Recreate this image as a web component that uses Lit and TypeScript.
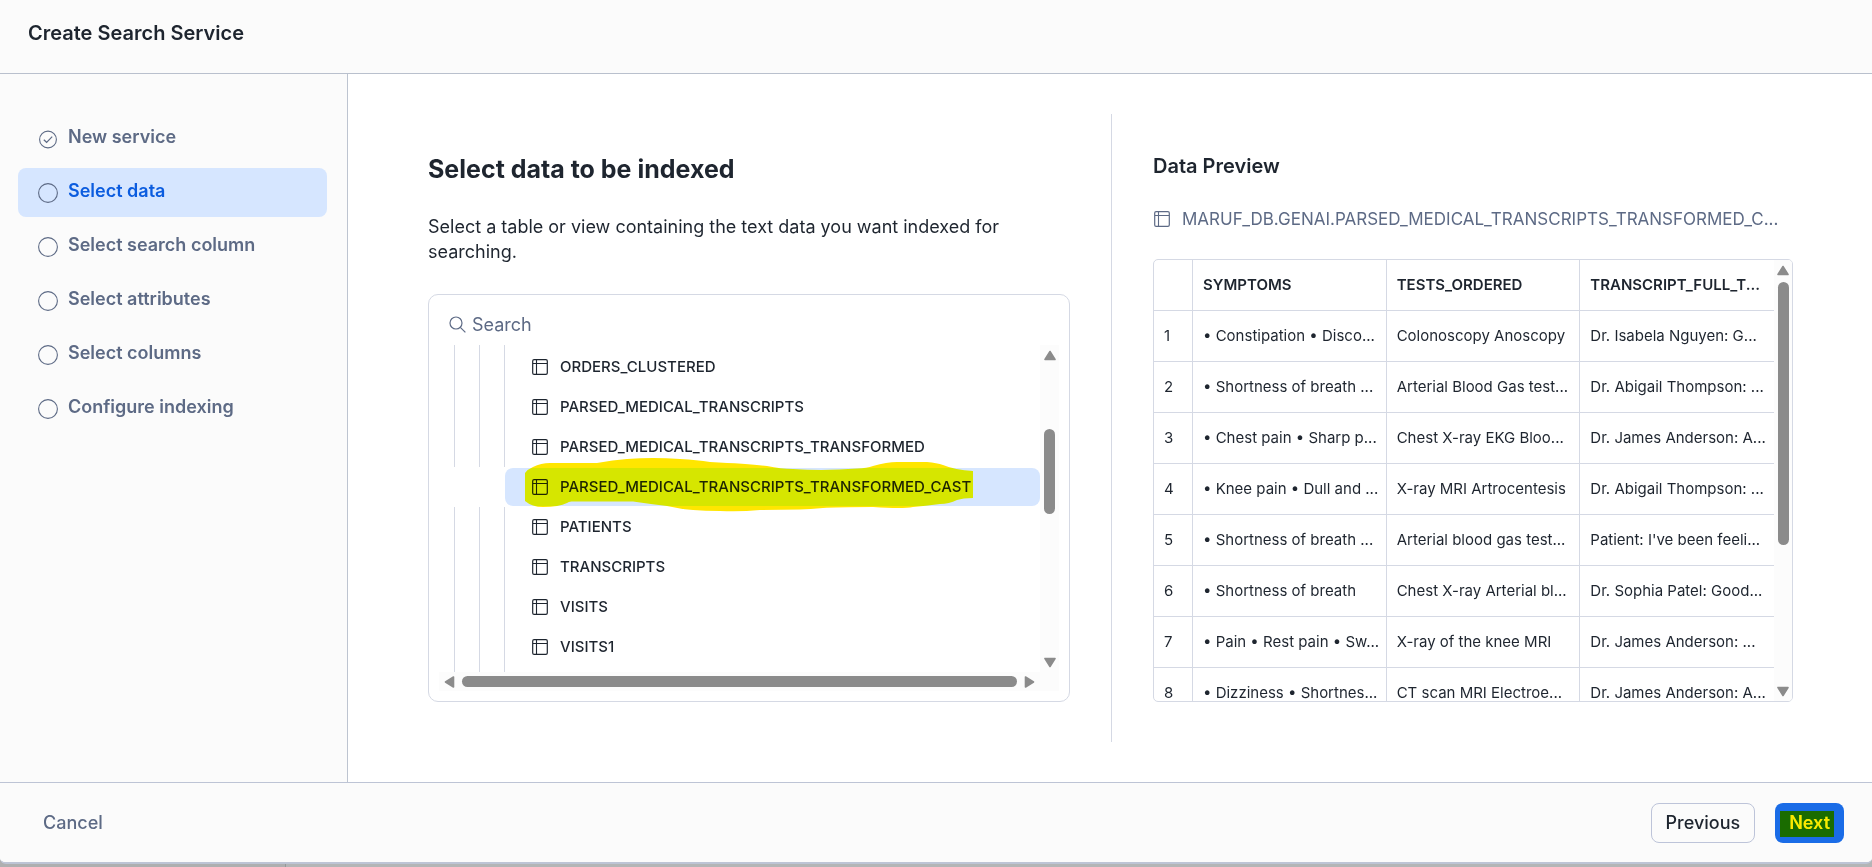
import { LitElement, html, css, svg, nothing } from "lit";
import { customElement, state } from "lit/decorators.js";
import { classMap } from "lit/directives/class-map.js";

const STEPS = [
  "New service",
  "Select data",
  "Select search column",
  "Select attributes",
  "Select columns",
  "Configure indexing",
];

const TABLES = [
  "ORDERS_CLUSTERED",
  "PARSED_MEDICAL_TRANSCRIPTS",
  "PARSED_MEDICAL_TRANSCRIPTS_TRANSFORMED",
  "PARSED_MEDICAL_TRANSCRIPTS_TRANSFORMED_CAST",
  "PATIENTS",
  "TRANSCRIPTS",
  "VISITS",
  "VISITS1",
];

const COLUMNS = ["SYMPTOMS", "TESTS_ORDERED", "TRANSCRIPT_FULL_T..."];

const ROWS = [
  ["• Constipation • Disco...", "Colonoscopy Anoscopy", "Dr. Isabela Nguyen: G..."],
  ["• Shortness of breath ...", "Arterial Blood Gas test...", "Dr. Abigail Thompson: ..."],
  ["• Chest pain • Sharp p...", "Chest X-ray EKG Bloo...", "Dr. James Anderson: A..."],
  ["• Knee pain • Dull and ...", "X-ray MRI Artrocentesis", "Dr. Abigail Thompson: ..."],
  ["• Shortness of breath ...", "Arterial blood gas test...", "Patient: I've been feeli..."],
  ["• Shortness of breath", "Chest X-ray Arterial bl...", "Dr. Sophia Patel: Good..."],
  ["• Pain • Rest pain • Sw...", "X-ray of the knee MRI", "Dr. James Anderson: ..."],
  ["• Dizziness • Shortnes...", "CT scan MRI Electroe...", "Dr. James Anderson: A..."],
];

const tableIcon = html`<svg class="table-icon" width="16" height="16" viewBox="0 0 16 16" fill="none" stroke="currentColor" aria-hidden="true">
  <rect x="0.7" y="0.7" width="14.6" height="14.6" rx="1.4" stroke-width="1.2" />
  <path d="M1 4.5H15M4.5 1V15" stroke-width="1.1" />
</svg>`;

const ARROWS = {
  up: "M6 1.5 L11 9.5 H1 Z",
  down: "M6 10.5 L1 2.5 H11 Z",
  left: "M1.5 6 L9.5 1 V11 Z",
  right: "M10.5 6 L2.5 1 V11 Z",
};

const arrow = (dir: keyof typeof ARROWS) => html`<svg class="arrow" width="12" height="12" viewBox="0 0 12 12" aria-hidden="true">
  ${svg`<path d=${ARROWS[dir]} fill="#8b8b8b" stroke="#8b8b8b" stroke-width="1.6" stroke-linejoin="round" />`}
</svg>`;

const marker = html`<svg class="marker" width="448" height="55" viewBox="0 0 448 55" aria-hidden="true">
  <path
    fill="#ffe600"
    d="M0 16 Q3 12 8 10 Q16 6 25 6 H72 Q88 3 102 2 Q128 0 155 2 Q172 3 185 5 Q225 7 242 9 Q256 12 268 12 Q300 14 332 11.500 Q342 11 348 9 Q362 5 372 5 H402 Q412 6 418 8 Q430 13 448 14 V41 Q438 41 432 43 Q424 47 415 47 Q400 49 388 50 Q378 52 348 50 Q310 50 298 51 Q285 52 275 52.500 L235 53 Q215 55 195 54 Q180 54 168 53 Q155 52 142 49 Q125 47 108 44.500 H48 Q44 44 42 46 Q34 50 18 50 Q7 50 0 44 Z"
  />
</svg>`;

@customElement("app-root")
export class AppRoot extends LitElement {
  @state() private step = 1;
  @state() private selected = 3;

  static styles = css`
    * {
      box-sizing: border-box;
    }
    :host {
      box-sizing: border-box;
      display: flex;
      flex-direction: column;
      height: 100vh;
      padding-bottom: 3px;
      overflow: hidden;
      background: linear-gradient(90deg, #aeafb0 285px, #949899 285px 286px, #b3b5b6 286px);
      color: #1e252f;
      font-family: Inter, "Liberation Sans", sans-serif;
      font-size: 18px;
    }
    button,
    input {
      font: inherit;
      color: inherit;
      margin: 0;
      padding: 0;
      border: 0;
      background: none;
      text-align: left;
    }
    h1, h2, h3, p, ol, ul {
      margin: 0;
      padding: 0;
      list-style: none;
    }
    .dialog {
      flex: 1;
      min-height: 0;
      display: flex;
      flex-direction: column;
      background: #ffffff;
      border-bottom: 2px solid #bdc4d5;
      border-radius: 0 0 6px 6px;
      overflow: hidden;
    }
    .header {
      padding: 21px 28px 28px;
      border-bottom: 1px solid #b9c0cd;
      background: #fbfbfb;
    }
    .title,
    .preview-title {
      font-size: 20px;
      line-height: 24px;
      font-weight: 600;
    }
    .body {
      flex: 1;
      min-height: 0;
      display: flex;
    }
    .sidebar {
      width: 348px;
      padding: 40px 20px 0 18px;
      border-right: 1px solid #bdc4d0;
      background: #fbfbfb;
    }
    .steps {
      display: flex;
      flex-direction: column;
      gap: 5px;
    }
    .step {
      display: flex;
      align-items: center;
      gap: 10px;
      width: 100%;
      height: 49px;
      padding: 0 20px;
      border-radius: 8px;
      color: #5d6a85;
      font-weight: 600;
      line-height: 22px;
    }
    .step svg {
      color: #5d6a85;
      flex: none;
    }
    .step.current {
      background: #d6e6ff;
      color: #0b5cdf;
    }
    .step-label {
      padding-bottom: 3px;
    }
    .main {
      flex: 1;
      min-width: 0;
      display: grid;
      grid-template-columns: minmax(0, 642fr) 1px minmax(0, 640fr);
      grid-template-rows: minmax(0, 1fr);
      gap: 41px;
      padding: 40px 79px 40px 80px;
    }
    .divider {
      background: #d5d9e4;
    }
    .column {
      display: flex;
      flex-direction: column;
      min-height: 0;
      padding: 40px 0;
    }
    .heading {
      font-size: 25px;
      line-height: 30px;
      font-weight: 700;
    }
    .lead {
      margin: 30px 0;
      line-height: 25px;
    }
    .card {
      flex: 1;
      min-height: 0;
      display: flex;
      flex-direction: column;
      padding: 10px;
      border: 1px solid #d5d9e4;
      border-radius: 10px;
    }
    .search {
      display: flex;
      align-items: center;
      gap: 6px;
      height: 40px;
      padding: 0 10px 2px;
      color: #5d6a85;
    }
    .search input {
      flex: 1;
      min-width: 0;
      height: 24px;
      outline: none;
    }
    .search input::placeholder {
      color: #5d6a85;
      opacity: 1;
    }
    .scroll-area {
      flex: 1;
      min-height: 0;
      display: grid;
      grid-template-columns: minmax(0, 1fr) 19px;
      grid-template-rows: minmax(0, 1fr) 19px;
    }
    .tree {
      display: flex;
      flex-direction: column;
      overflow: hidden;
    }
    .tree-item {
      display: flex;
      flex: none;
      height: 40px;
    }
    .tree-item.lead-in {
      height: 2px;
    }
    .tree-item.rest {
      flex: 1;
      height: auto;
    }
    .guides {
      display: flex;
      gap: 24px;
      width: 66px;
      padding-left: 15px;
      flex: none;
    }
    .guide {
      width: 1px;
      background: #d5d9e4;
    }
    .selected .guide {
      visibility: hidden;
    }
    .node {
      position: relative;
      flex: 1;
      display: flex;
      align-items: center;
      gap: 12px;
      height: 38px;
      margin: 1px 0;
      padding: 0 27px;
      border-radius: 8px;
      font-size: 15px;
      line-height: 20px;
      font-weight: 500;
      white-space: nowrap;
    }
    .selected .node {
      background: #d6e6ff;
    }
    .marker {
      position: absolute;
      left: 20px;
      top: -11px;
      z-index: 1;
      mix-blend-mode: darken;
      pointer-events: none;
    }
    .table-icon {
      flex: none;
    }
    .arrow {
      flex: none;
    }
    .bar {
      display: flex;
      align-items: center;
      background: #fcfcfc;
    }
    .bar.vertical {
      flex-direction: column;
      padding: 5px 0 4px;
    }
    .bar.horizontal {
      padding: 0 5px;
    }
    .corner {
      background: #fcfcfc;
    }
    .track {
      flex: 1;
      display: flex;
      min-height: 0;
    }
    .vertical .track {
      flex-direction: column;
      width: 11px;
      padding: 5px 0;
    }
    .horizontal .track {
      height: 11px;
      padding: 0 6px;
    }
    .thumb {
      border-radius: 6px;
      background: #8b8b8b;
    }
    .horizontal .thumb {
      flex: 1;
    }
    .tree-before { flex: 62; }
    .tree-thumb { flex: 85; }
    .tree-after { flex: 137; }
    .grid-thumb { flex: 263; }
    .grid-after { flex: 135; }
    .source {
      display: flex;
      align-items: center;
      gap: 12px;
      margin: 30px 0 29px;
      padding-left: 1px;
      font-size: 17px;
      line-height: 22px;
      color: #5d6a85;
    }
    .source-name {
      min-width: 0;
      white-space: nowrap;
      overflow: hidden;
      text-overflow: ellipsis;
    }
    .preview {
      flex: 1;
      min-height: 0;
      display: grid;
      grid-template-columns: minmax(0, 1fr) 18px;
      grid-template-rows: minmax(0, 1fr);
      border: 1px solid #d5d9e4;
      border-radius: 5px;
      overflow: hidden;
    }
    .table-view {
      overflow: hidden;
    }
    table {
      width: 100%;
      table-layout: fixed;
      border-collapse: separate;
      border-spacing: 0;
      font-size: 15px;
      line-height: 20px;
    }
    th,
    td {
      height: 51px;
      padding: 0 10px;
      border-right: 1px solid #d5d9e4;
      border-bottom: 1px solid #d5d9e4;
      text-align: left;
      font-weight: 400;
      white-space: nowrap;
    }
    th:last-child,
    td:last-child {
      border-right: 0;
    }
    thead th {
      font-weight: 600;
    }
    .index {
      width: 39px;
    }
    .footer {
      display: flex;
      align-items: center;
      gap: 20px;
      padding: 20px 28px 19px;
      border-top: 1px solid #bdc4d5;
      background: #fbfbfb;
      font-weight: 500;
    }
    .btn {
      height: 40px;
      padding: 0 14px;
      border: 1px solid transparent;
      border-radius: 8px;
      line-height: 22px;
    }
    .btn.cancel {
      margin-right: auto;
      color: #5d6a85;
    }
    .btn.previous {
      border-color: #bdc4d9;
    }
    .btn.next {
      position: relative;
      padding: 0 13px;
      background: #1a6ce7;
      color: #ffffff;
      font-weight: 600;
    }
    .swipe {
      position: absolute;
      left: 4px;
      top: 7px;
      width: 54px;
      height: 26px;
      background: #ffe600;
      mix-blend-mode: darken;
    }
  `;

  private guides() {
    return html`<span class="guides"><span class="guide"></span><span class="guide"></span><span class="guide"></span></span>`;
  }

  render() {
    return html`
      <div class="dialog">
        <header class="header"><h1 class="title">Create Search Service</h1></header>
        <div class="body">
          <nav class="sidebar" aria-label="Steps">
            <ol class="steps">
              ${STEPS.map(
                (label, i) => html`<li>
                  <button class=${classMap({ step: true, current: i === this.step })} @click=${() => (this.step = i)}>
                    <svg width="20" height="20" viewBox="0 0 20 20" fill="none" stroke="currentColor" aria-hidden="true">
                      ${i === 0
                        ? svg`<circle cx="10" cy="10.500" r="8.400" stroke-width="1.1" /><path d="M5.800 10.800 L8.600 13.300 L14.200 7.600" stroke-width="1.2" />`
                        : svg`<circle cx="10" cy="10" r="9.400" stroke-width="1.1" />`}
                    </svg>
                    <span class="step-label">${label}</span>
                  </button>
                </li>`
              )}
            </ol>
          </nav>
          <main class="main">
            <section class="column">
              <h2 class="heading">Select data to be indexed</h2>
              <p class="lead">Select a table or view containing the text data you want indexed for searching.</p>
              <div class="card">
                <label class="search">
                  <svg width="17" height="17" viewBox="0 0 17 17" fill="none" stroke="currentColor" stroke-width="1.2" aria-hidden="true">
                    <circle cx="7" cy="7" r="6" />
                    <path d="M11.300 11.300 L16.400 16.400" />
                  </svg>
                  <input type="text" placeholder="Search" aria-label="Search" />
                </label>
                <div class="scroll-area">
                  <ul class="tree">
                    <li class="tree-item lead-in" aria-hidden="true">${this.guides()}</li>
                    ${TABLES.map(
                      (name, i) => html`<li class=${classMap({ "tree-item": true, selected: i === this.selected })}>
                        ${this.guides()}
                        <button class="node" @click=${() => (this.selected = i)}>
                          ${tableIcon}<span>${name}</span>
                          ${i === this.selected ? marker : nothing}
                        </button>
                      </li>`
                    )}
                    <li class="tree-item rest" aria-hidden="true">${this.guides()}</li>
                  </ul>
                  <div class="bar vertical">
                    ${arrow("up")}
                    <div class="track"><span class="tree-before"></span><span class="thumb tree-thumb"></span><span class="tree-after"></span></div>
                    ${arrow("down")}
                  </div>
                  <div class="bar horizontal">
                    ${arrow("left")}
                    <div class="track"><span class="thumb"></span></div>
                    ${arrow("right")}
                  </div>
                  <div class="corner"></div>
                </div>
              </div>
            </section>
            <div class="divider"></div>
            <section class="column">
              <h3 class="preview-title">Data Preview</h3>
              <div class="source">
                ${tableIcon}<span class="source-name">MARUF_DB.GENAI.PARSED_MEDICAL_TRANSCRIPTS_TRANSFORMED_C...</span>
              </div>
              <div class="preview">
                <div class="table-view">
                  <table>
                    <thead>
                      <tr>
                        <th class="index"></th>
                        ${COLUMNS.map((c) => html`<th scope="col">${c}</th>`)}
                      </tr>
                    </thead>
                    <tbody>
                      ${ROWS.map(
                        (r, i) => html`<tr>
                          <td>${i + 1}</td>
                          ${r.map((c) => html`<td>${c}</td>`)}
                        </tr>`
                      )}
                    </tbody>
                  </table>
                </div>
                <div class="bar vertical">
                  ${arrow("up")}
                  <div class="track"><span class="thumb grid-thumb"></span><span class="grid-after"></span></div>
                  ${arrow("down")}
                </div>
              </div>
            </section>
          </main>
        </div>
        <footer class="footer">
          <button class="btn cancel">Cancel</button>
          <button class="btn previous">Previous</button>
          <button class="btn next">Next<span class="swipe"></span></button>
        </footer>
      </div>
    `;
  }
}
